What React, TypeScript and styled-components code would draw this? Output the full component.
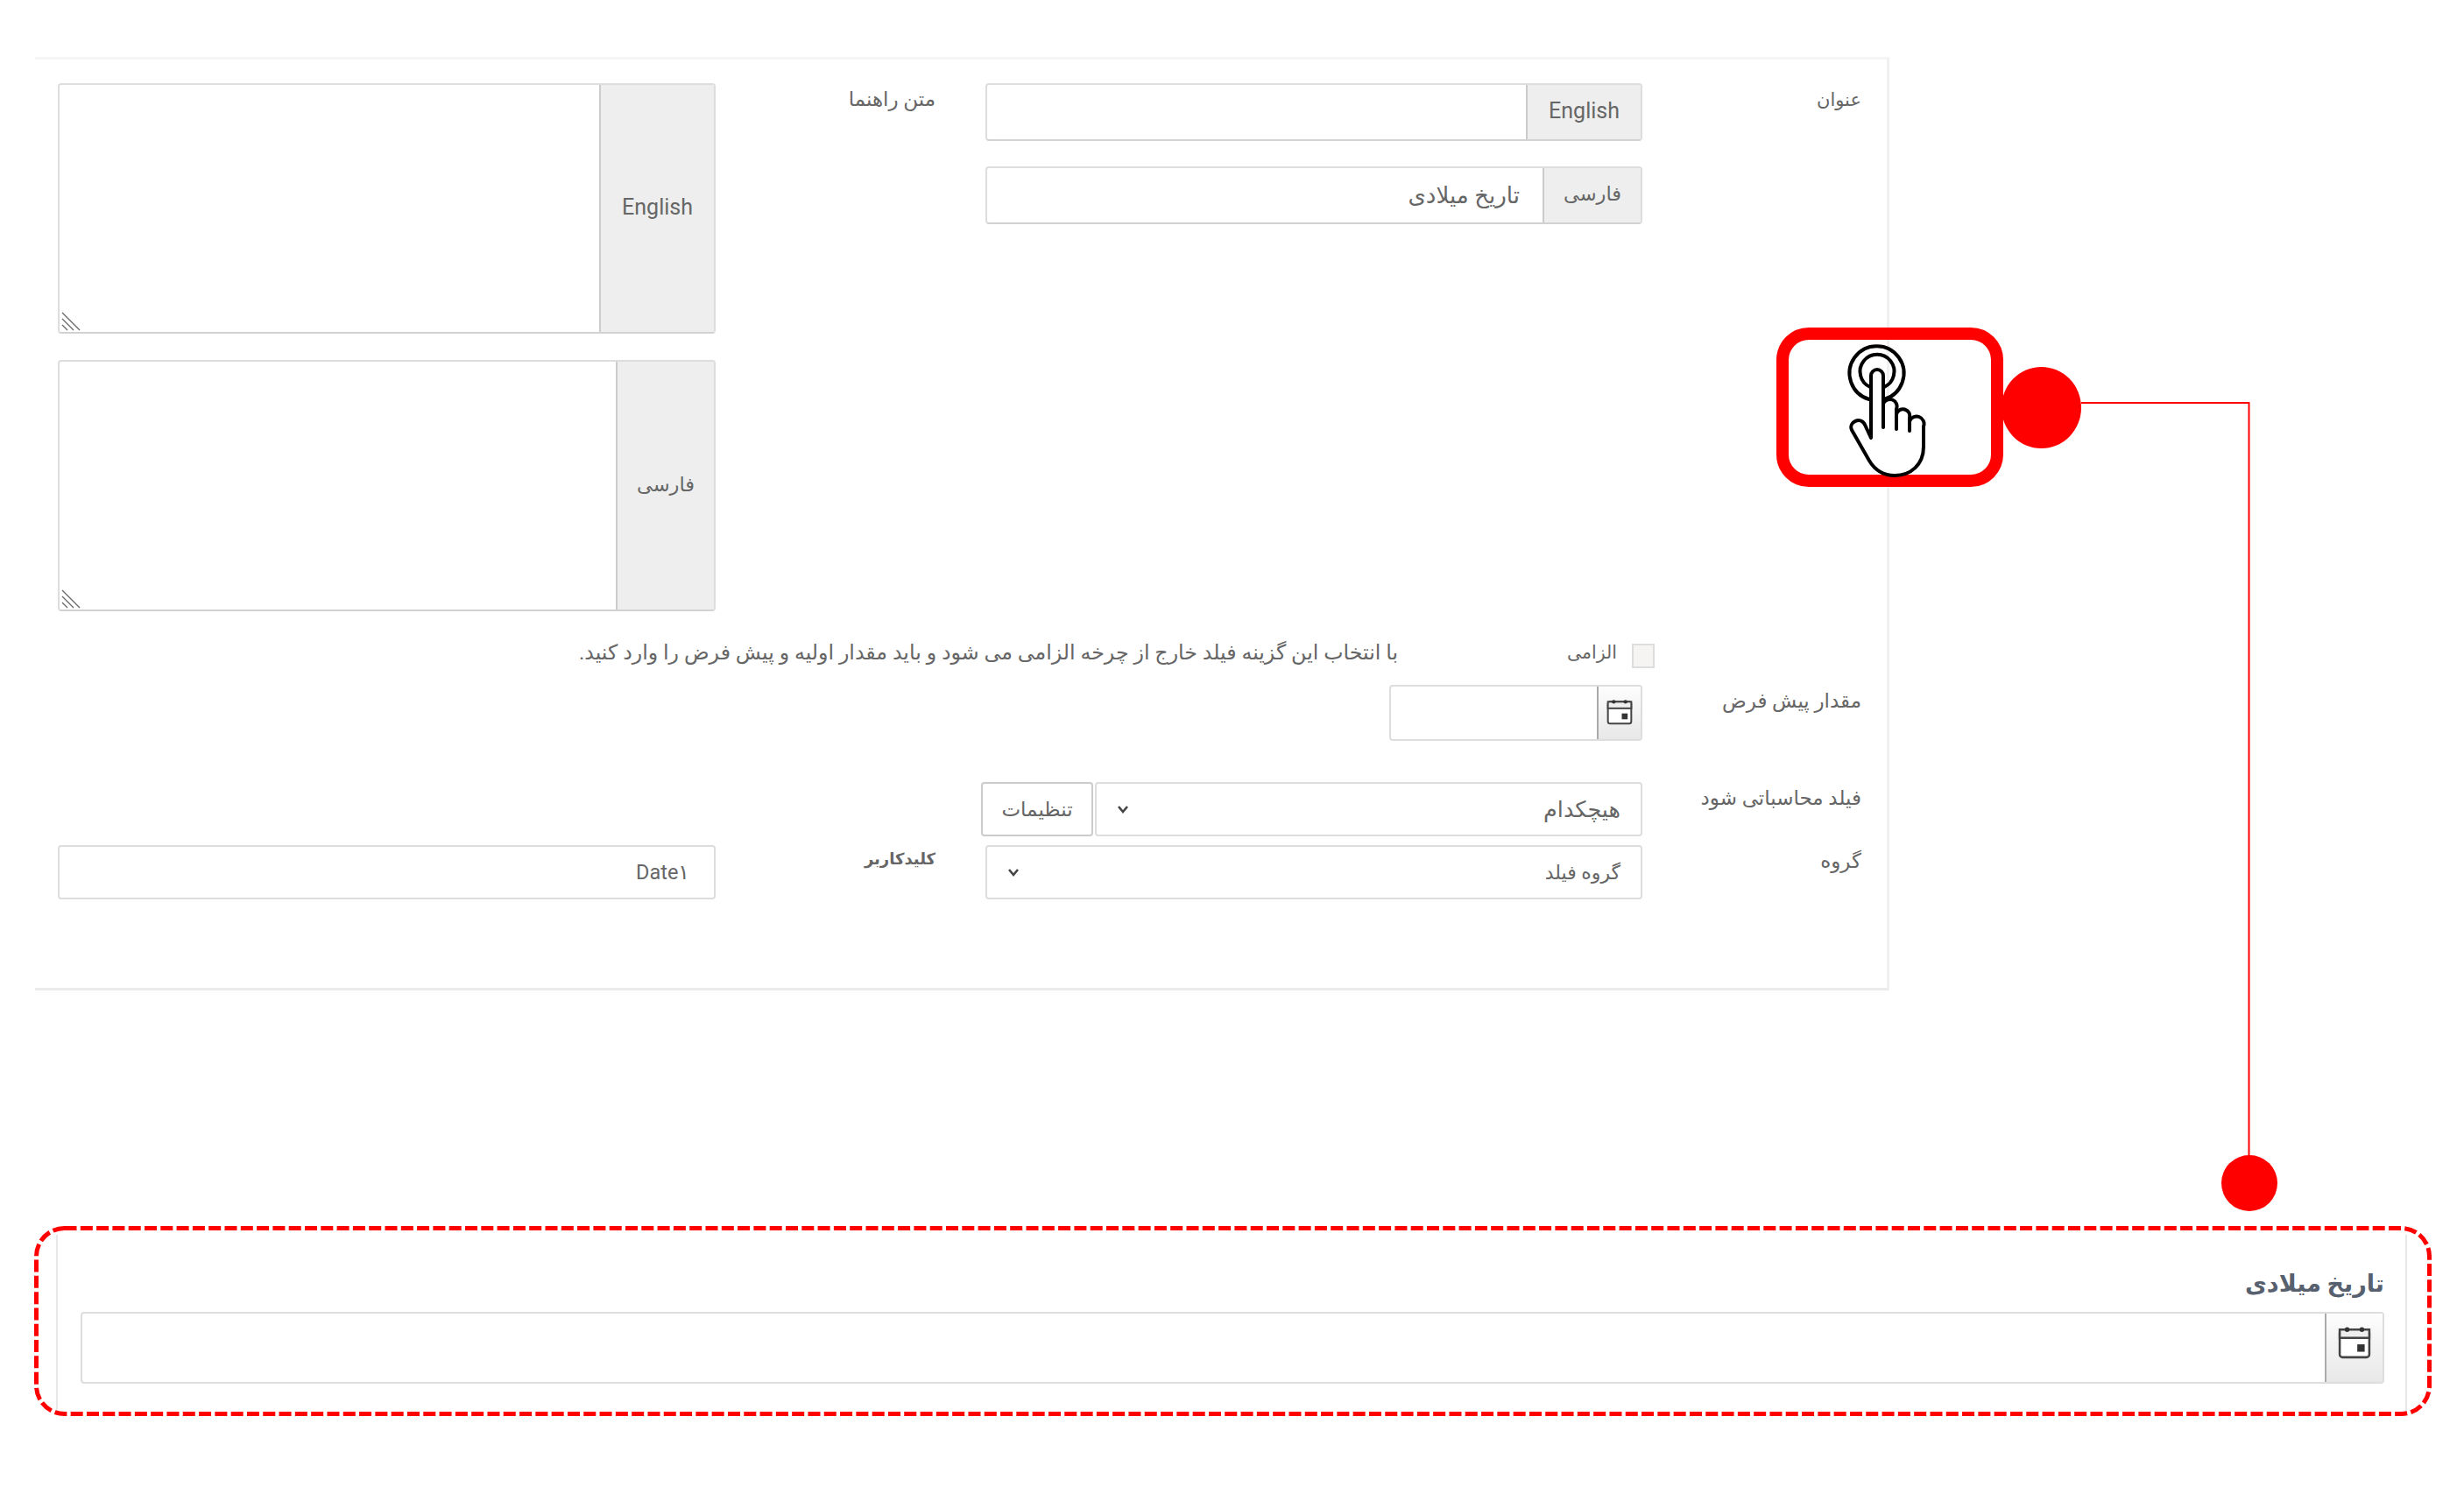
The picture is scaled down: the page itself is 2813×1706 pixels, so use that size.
import React from 'react';
import styled, { createGlobalStyle } from 'styled-components';

const FONT = `Roboto, "DejaVu Sans", sans-serif`;

const GlobalStyle = createGlobalStyle`
  html, body {
    margin: 0;
    padding: 0;
    background: #fff;
  }
`;

const CalendarIcon: React.FC<{ size: number }> = ({ size }) => (
  <svg width={size} height={size} viewBox="0 0 36 36" fill="none">
    <rect x="2" y="4" width="32" height="30" rx="3" fill="#fff" stroke="#444" strokeWidth="2.4" />
    <rect x="2" y="4" width="32" height="9" fill="#eee" stroke="#444" strokeWidth="2.4" />
    <circle cx="10" cy="4" r="2.6" fill="#333" />
    <circle cx="26" cy="4" r="2.6" fill="#333" />
    <rect x="21" y="20" width="8" height="8" fill="#333" />
  </svg>
);

const Chevron = () => (
  <svg width="14" height="12" viewBox="0 0 14 12" fill="none">
    <path d="M2 3 L7 9 L12 3" stroke="#444" strokeWidth="2.6" />
  </svg>
);

const ResizeHandle = () => (
  <HandleMark width="24" height="22" viewBox="0 0 24 22" fill="none">
    <path d="M1 1 L21 21 M1 8 L14 21 M1 15 L7 21" stroke="#666" strokeWidth="1.3" />
  </HandleMark>
);

const Annotations = () => (
  <Overlay viewBox="0 0 2813 1706" fill="none">
    <rect x="2035" y="381" width="245" height="168" rx="30" stroke="#f00" strokeWidth="14" />
    <ellipse cx="2330.5" cy="465.5" rx="45.5" ry="46.5" fill="#f00" />
    <path d="M2376 460 H2567.5 V1325" stroke="#f00" strokeWidth="2" />
    <circle cx="2568" cy="1351" r="32" fill="#f00" />
    <rect
      x="41.5"
      y="1402.5"
      width="2732"
      height="212"
      rx="32"
      stroke="#f00"
      strokeWidth="5"
      strokeDasharray="14 4.3"
    />
    <g transform="translate(2105 385)" stroke="#000" strokeWidth="4" strokeLinecap="round" strokeLinejoin="round">
      <path d="M29 71 A31 31 0 1 1 46 71" />
      <path d="M30 57 A19.5 19.5 0 1 1 46 57" />
      <path
        d="M31 115 V44 A7 7 0 0 1 45 44 V76 A7.5 7.5 0 0 1 60 82 V88 A7.5 7.5 0 0 1 75 92 V96 A8 8 0 0 1 91 102 V125 C91 146 76 158 58 158 C44 158 35 151 29 141 L9 106 C5 97 19 90 24 100 Z"
        fill="#fff"
      />
      <path d="M45 76 V103 M60 88 V105 M75 96 V107" />
    </g>
  </Overlay>
);

export default function App() {
  return (
    <Page>
      <GlobalStyle />
      <SettingsPanel dir="rtl">
        <FormRow $top={0}>
          <Label $size={21}>عنوان</Label>
          <FieldStack $gap={29}>
            <InputGroup $height={66}>
              <Addon>English</Addon>
              <InputBody />
            </InputGroup>
            <InputGroup $height={66}>
              <Addon $farsi>فارسی</Addon>
              <InputBody>تاریخ میلادی</InputBody>
            </InputGroup>
          </FieldStack>
          <Label $inset={57}>متن راهنما</Label>
          <FieldStack $gap={30}>
            <InputGroup $height={286}>
              <Addon>English</Addon>
              <InputBody>
                <ResizeHandle />
              </InputBody>
            </InputGroup>
            <InputGroup $height={287}>
              <Addon $farsi>فارسی</Addon>
              <InputBody>
                <ResizeHandle />
              </InputBody>
            </InputGroup>
          </FieldStack>
        </FormRow>

        <FormRow $top={35}>
          <span />
          <RequiredRow>
            <RequiredGroup>
              <Checkbox />
              <SmallText $size={20.5}>الزامی</SmallText>
            </RequiredGroup>
            <SmallText $size={23.7}>با انتخاب این گزینه فیلد خارج از چرخه الزامی می شود و باید مقدار اولیه و پیش فرض را وارد کنید.</SmallText>
          </RequiredRow>
        </FormRow>

        <FormRow $top={19}>
          <Label>مقدار پیش فرض</Label>
          <DateField $width={289} $height={64}>
            <DateButton $width={50} $lift={2}>
              <CalendarIcon size={30} />
            </DateButton>
            <InputBody />
          </DateField>
        </FormRow>

        <FormRow $top={47}>
          <Label>فیلد محاسباتی شود</Label>
          <SelectWithButton>
            <SelectBox $height={62} $size={25.5}>
              هیچکدام
              <Chevron />
            </SelectBox>
            <SettingsButton>تنظیمات</SettingsButton>
          </SelectWithButton>
        </FormRow>

        <FormRow $top={10}>
          <Label>گروه</Label>
          <SelectBox $height={62} $size={22}>
            گروه فیلد
            <Chevron />
          </SelectBox>
          <Label $inset={57} $offset={-3} $strong>
            کلیدکاربر
          </Label>
          <PlainInput>Date۱</PlainInput>
        </FormRow>
      </SettingsPanel>

      <PreviewPanel dir="rtl">
        <PreviewTitle>تاریخ میلادی</PreviewTitle>
        <DateField $height={82}>
          <DateButton $width={66} $lift={12}>
            <CalendarIcon size={38} />
          </DateButton>
          <InputBody />
        </DateField>
      </PreviewPanel>

      <Annotations />
    </Page>
  );
}

const Page = styled.div`
  position: relative;
  width: 2813px;
  height: 1706px;
  overflow: hidden;
  padding-top: 65px;
  box-sizing: border-box;
  font-family: ${FONT};
  color: #666;
  background: #fff;
`;

const SettingsPanel = styled.section`
  box-sizing: border-box;
  width: 2117px;
  height: 1066px;
  margin-left: 40px;
  padding-top: 27px;
  border-top: 3px solid #f5f5f5;
  border-right: 3px solid #f0f0f0;
  border-bottom: 3px solid #ebebeb;
`;

const FormRow = styled.div<{ $top: number }>`
  display: grid;
  grid-template-columns: 279px 750px 308px 751px;
  margin-top: ${(p) => p.$top}px;
`;

const Label = styled.div<{ $inset?: number; $offset?: number; $strong?: boolean; $size?: number }>`
  padding-right: ${(p) => p.$inset ?? 29}px;
  padding-top: ${(p) => 3 + (p.$offset ?? 0)}px;
  font-size: ${(p) => p.$size ?? (p.$strong ? 18 : 23)}px;
  line-height: 32px;
  font-weight: ${(p) => (p.$strong ? 700 : 400)};
`;

const FieldStack = styled.div<{ $gap: number }>`
  display: flex;
  flex-direction: column;
  gap: ${(p) => p.$gap}px;
`;

const InputGroup = styled.div<{ $height: number }>`
  display: flex;
  box-sizing: border-box;
  height: ${(p) => p.$height}px;
  border: 2px solid #ddd;
  border-bottom-color: #d2d2d2;
  border-radius: 4px;
  background: #fff;
`;

const Addon = styled.div<{ $farsi?: boolean }>`
  display: flex;
  align-items: center;
  padding: 0 ${(p) => (p.$farsi ? '22px' : '24px')} 4px;
  background: #eee;
  border-left: 2px solid #ccc;
  font-size: ${(p) => (p.$farsi ? 22.5 : 25)}px;
  color: #666;
`;

const InputBody = styled.div`
  position: relative;
  flex: 1;
  display: flex;
  align-items: center;
  padding: 0 26px;
  font-size: 26px;
  color: #666;
`;

const HandleMark = styled.svg`
  position: absolute;
  left: 2px;
  bottom: 1px;
`;

const RequiredRow = styled.div`
  grid-column: 2 / -1;
  display: flex;
  align-items: flex-start;
  height: 30px;
  margin-right: -14px;
`;

const RequiredGroup = styled.div`
  display: flex;
  gap: 17px;
  width: 293px;
`;

const Checkbox = styled.div`
  box-sizing: border-box;
  width: 26px;
  height: 28px;
  margin-top: 2px;
  border: 2px solid #ddd;
  background: #f6f3f3;
`;

const SmallText = styled.span<{ $size: number }>`
  font-size: ${(p) => p.$size}px;
  line-height: 24px;
  color: #666;
`;

const DateField = styled.div<{ $width?: number; $height: number }>`
  display: flex;
  box-sizing: border-box;
  width: ${(p) => (p.$width ? `${p.$width}px` : 'auto')};
  height: ${(p) => p.$height}px;
  border: 2px solid #ddd;
  border-radius: 4px;
  background: #fff;
`;

const DateButton = styled.div<{ $width: number; $lift: number }>`
  display: flex;
  align-items: center;
  justify-content: center;
  box-sizing: border-box;
  width: ${(p) => p.$width}px;
  padding-bottom: ${(p) => p.$lift}px;
  background: linear-gradient(#fdfdfd, #e8e8e8);
  border-left: 2px solid #aaa;
`;

const SelectWithButton = styled.div`
  display: flex;
  gap: 2px;
  margin-left: -5px;
`;

const SelectBox = styled.div<{ $height: number; $size: number }>`
  flex: 1;
  display: flex;
  align-items: center;
  justify-content: space-between;
  box-sizing: border-box;
  height: ${(p) => p.$height}px;
  padding: 0 23px;
  border: 2px solid #ddd;
  border-radius: 4px;
  font-size: ${(p) => p.$size}px;
  color: #666;
  background: #fff;
`;

const SettingsButton = styled.div`
  display: flex;
  align-items: center;
  justify-content: center;
  box-sizing: border-box;
  width: 128px;
  height: 62px;
  border: 2px solid #ccc;
  border-radius: 4px;
  font-size: 23px;
  color: #666;
`;

const PlainInput = styled.div`
  display: flex;
  align-items: center;
  box-sizing: border-box;
  height: 62px;
  padding: 0 28px;
  border: 2px solid #ddd;
  border-radius: 4px;
  font-size: 23.5px;
  color: #666;
`;

const PreviewPanel = styled.section`
  box-sizing: border-box;
  width: 2684px;
  height: 206px;
  margin: 279px 0 0 64px;
  padding: 34px 24px 0 26px;
  border-left: 2px solid #e8e8e8;
  border-right: 2px solid #e8e8e8;
`;

const PreviewTitle = styled.div`
  height: 54px;
  font-size: 27px;
  line-height: 44px;
  font-weight: 700;
  color: #56606e;
`;

const Overlay = styled.svg`
  position: absolute;
  left: 0;
  top: 0;
  width: 2813px;
  height: 1706px;
  pointer-events: none;
`;
